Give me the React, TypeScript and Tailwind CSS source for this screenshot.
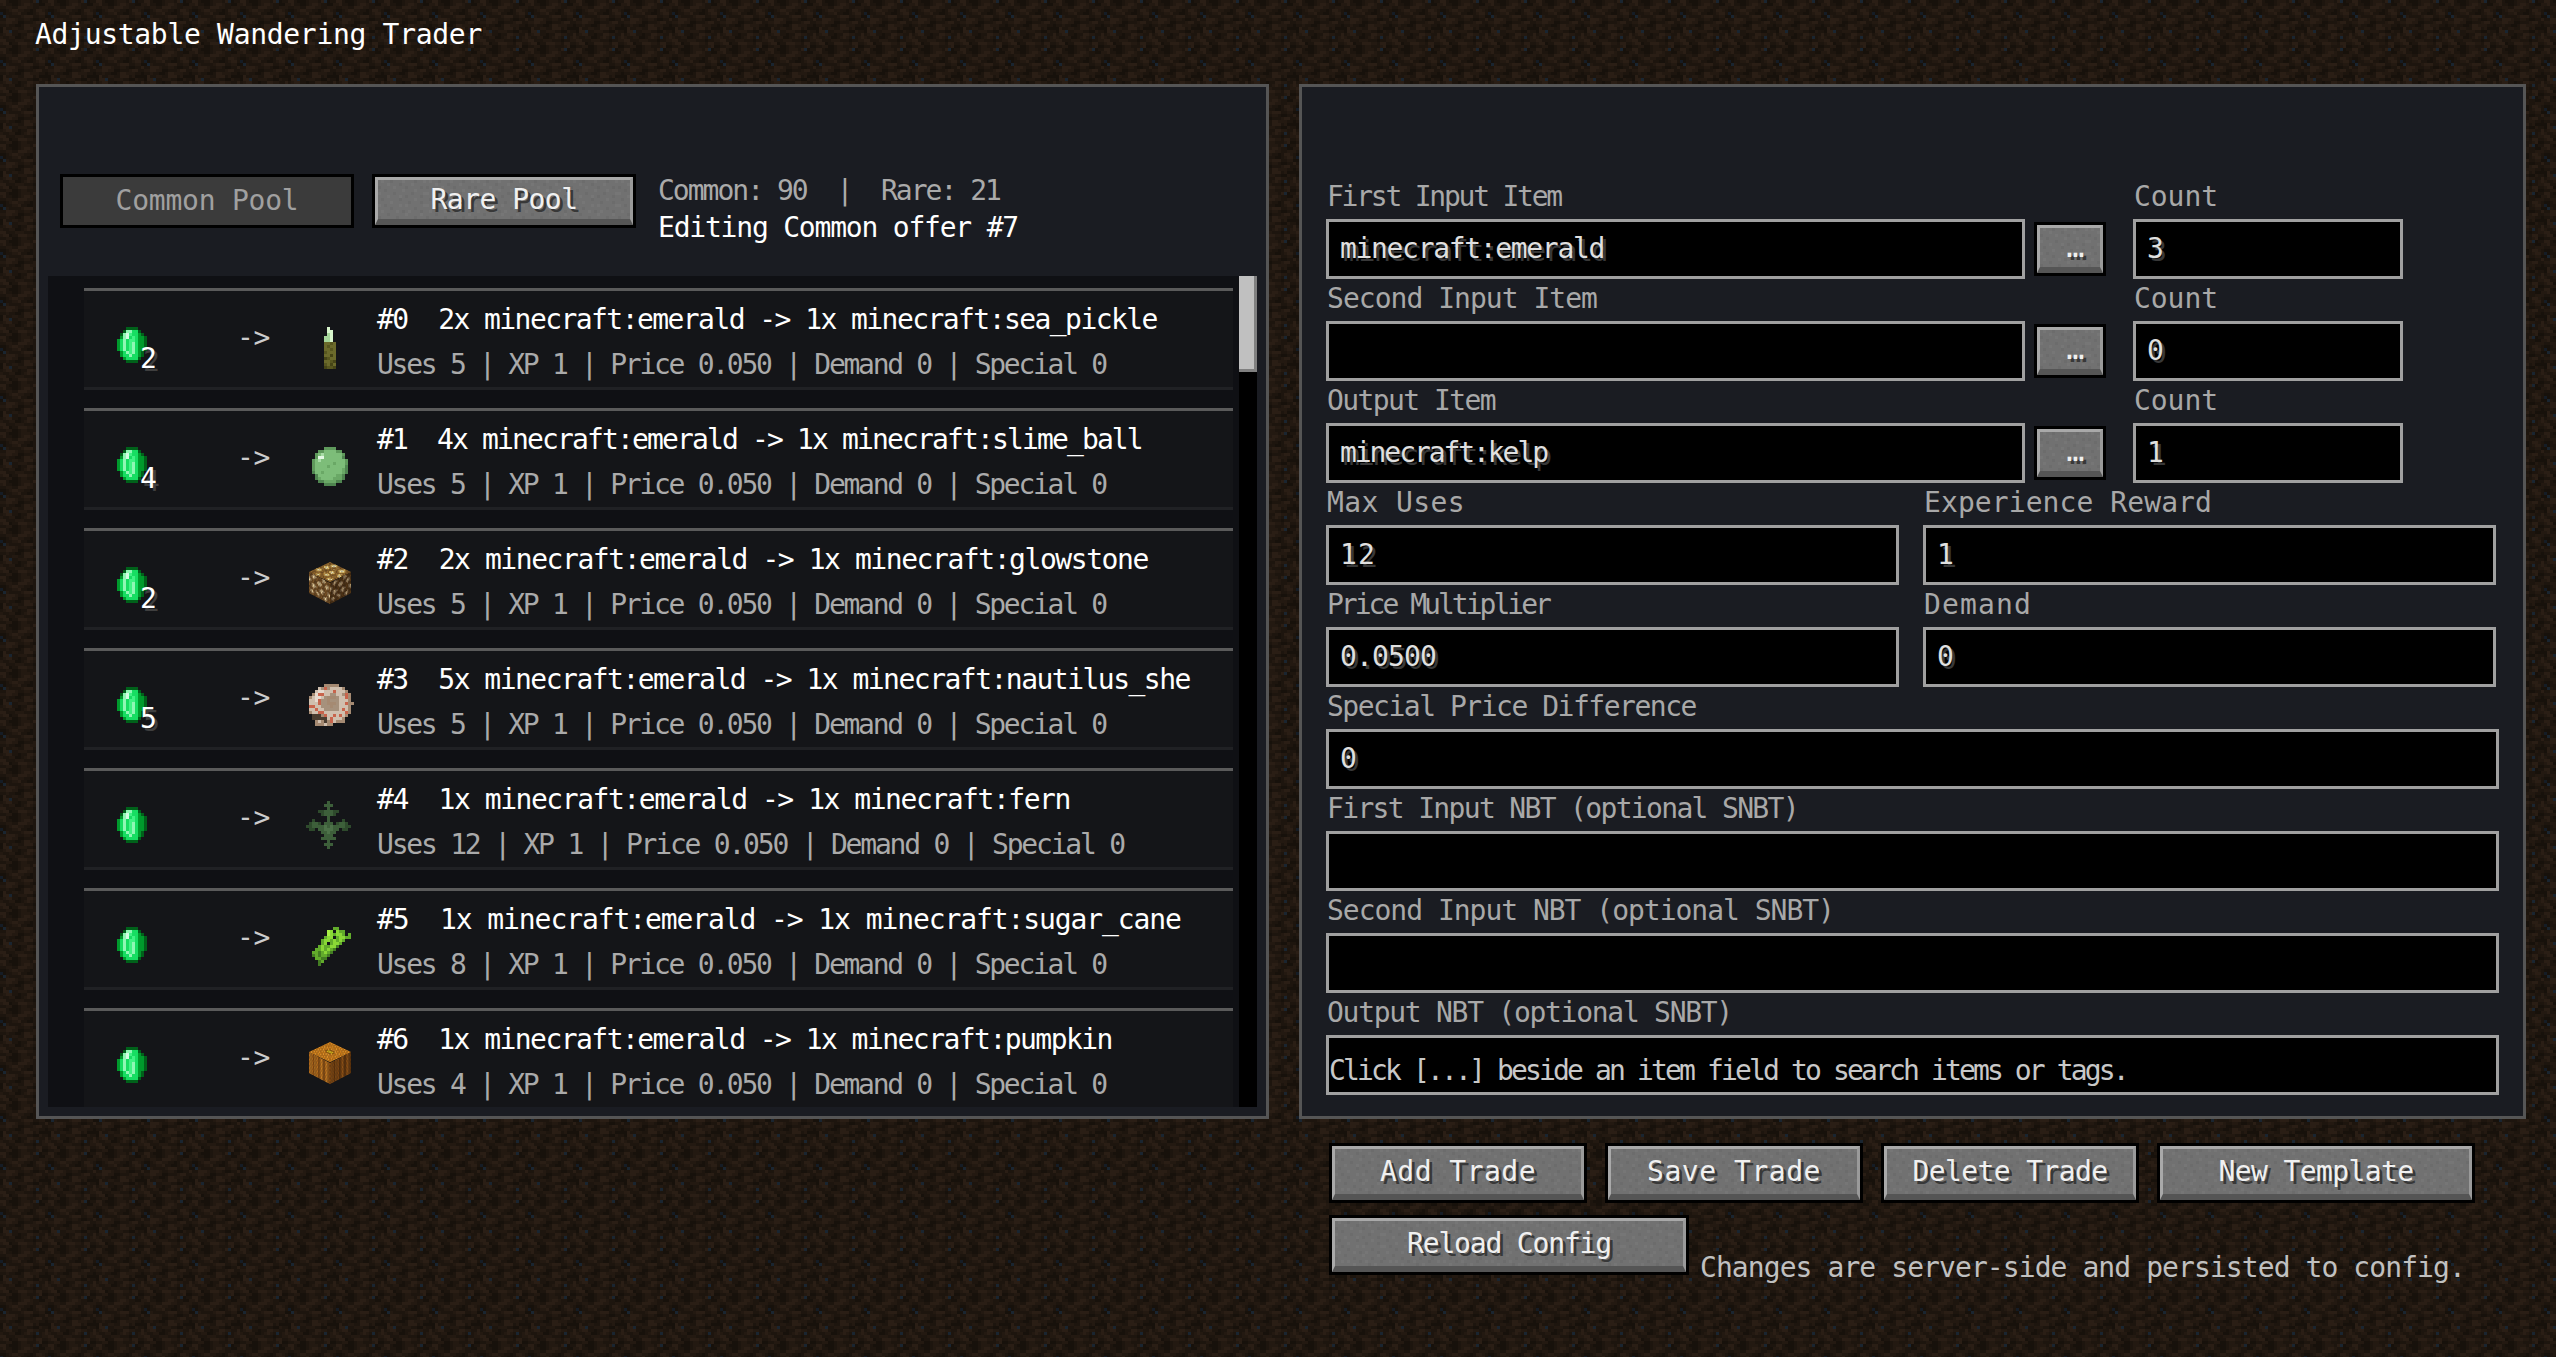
import React from 'react';

// Minecraft font advances (in font pixels, GUI scale is 3)
const narrow: Record<string, number> = {
  i: 2, l: 3, t: 4, f: 5, k: 5, I: 4, ' ': 4, '.': 2, ',': 2, ':': 2, ';': 2, '!': 2, '|': 2,
  '(': 5, ')': 5, '[': 4, ']': 4, '>': 5, '<': 5,
};
const textWidth = (s: string) => [...s].reduce((sum, c) => sum + (narrow[c] ?? 6), 0) * 3;

const T = ({ children, className = '' }: { children: string; className?: string }) => (
  <span
    className={`block whitespace-pre font-['DejaVu_Sans_Mono',monospace] text-[28px] leading-[27px] ${className}`}
    style={{ letterSpacing: textWidth(children) / children.length - 16.86 }}
  >
    {children}
  </span>
);

type Palette = Record<string, string>;

const Pixels = ({ rows, pal }: { rows: string[]; pal: Palette }) => (
  <>
    {rows.map((row, y) =>
      [...row].map((c, x) => (pal[c] ? <rect key={`${x}-${y}`} x={x} y={y} width={1.02} height={1.02} fill={pal[c]} /> : null))
    )}
  </>
);

const Sprite = ({ rows, pal }: { rows: string[]; pal: Palette }) => (
  <svg width={48} height={48} viewBox="0 0 16 16" shapeRendering="crispEdges" className="block">
    <Pixels rows={rows} pal={pal} />
  </svg>
);

const emerald = [
  '................',
  '................',
  '......DDDD......',
  '.....DWWggD.....',
  '....DWPLggGD....',
  '....GWPgLgGGD...',
  '...GgWgLLgGGD...',
  '...GgWgLWgGGD...',
  '...GgWgLWgGGD...',
  '...GgWgLWgGGD...',
  '....GgWLWgGD....',
  '....GggWggGD....',
  '.....GggggD.....',
  '......DDDD......',
  '................',
  '................',
];
const emeraldPal = { D: '#00611a', G: '#009a2c', g: '#17dd62', L: '#41f384', W: '#8ff7b4', P: '#d2fde2' };

const seaPickle = [
  '................',
  '................',
  '.......l........',
  '.......ll.......',
  '.......Ll.......',
  '......LLl.......',
  '......LLl.......',
  '......ooOo......',
  '......oOoo......',
  '......ooOo......',
  '......Oooo......',
  '......oodo......',
  '......dOoo......',
  '......ooOd......',
  '......Oodo......',
  '......dOOd......',
];
const seaPicklePal = { l: '#d8f5cc', L: '#a5d69a', o: '#6b6a2b', O: '#57561f', d: '#454416' };

const slime = [
  '................',
  '................',
  '......gggg......',
  '....ggLLLLgg....',
  '...gLWLLLLLLg...',
  '...gPPLLLLLLd...',
  '..gLWLLLLLLLLg..',
  '..gLLLLLLMLLLg..',
  '..gLLLLMLLLLLd..',
  '..gLLLLLLLLLMd..',
  '..dLLMLLLLLLMd..',
  '...dLLLLLLMMd...',
  '...dMLLLLMMMd...',
  '....ddMMMMdd....',
  '......dddd......',
  '................',
];
const slimePal = { g: '#5f9a5c', L: '#7dbd79', M: '#6aa866', d: '#4f8550', W: '#a8dca6', P: '#e4f8e4' };

const nautilus = [
  '................',
  '......bbbbb.....',
  '....ctrtccccb...',
  '...cwwcccrcccb..',
  '..bwrrccttcctrb.',
  '.bcwwctbbbtccrb.',
  '.ccwrttbtttcccb.',
  '.cccrttbbbtccrbb',
  '.rrcctttbttcccb.',
  '.ccrcctttttcrcb.',
  '.bccrrcccccccrb.',
  '..dddbrccrcrcb..',
  '..dddddcrcccb...',
  '...bcbdbrcbbb...',
  '...bbbcbb.......',
  '................',
];
const nautilusPal = { b: '#a58a72', c: '#d0bfae', t: '#a6917c', r: '#c8644c', w: '#e6dacf', d: '#4a3d30' };

const fern = [
  '.......m........',
  '......mmm.......',
  '.......m........',
  '....ddmmmdd.....',
  '.....dmmmd......',
  '.......m........',
  '..d....m....d...',
  '.dmmd.mmm.dmmd..',
  'ddmmmmlmlmmmmdd.',
  '.dd.mmlllmm.dd..',
  '.....mmlmm......',
  '......mmm.......',
  '.....mmmmm......',
  '.......m........',
  '......mmm.......',
  '.......m........',
];
const fernPal = { d: '#2e4a2c', m: '#3d5f3a', l: '#4d7249' };

const sugarCane = [
  '................',
  '................',
  '.........gg.....',
  '.......lL.Lgg...',
  '.......lLgLLg.g.',
  '......gLL.gLLgg.',
  '.....gLLgLgLg...',
  '.....gL.gLLg....',
  '....gLggLLd.....',
  '...ggLgLgd......',
  '..ggdgLgd.......',
  '..dgdggd........',
  '...ggdd.........',
  '....dg..........',
  '....d...........',
  '................',
];
const sugarCanePal = { l: '#a8ee45', L: '#8ad836', g: '#62ab2b', d: '#437d22' };

const glowTop = [
  'aabayyaabaacaaba',
  'abayYYyaabayyaab',
  'aaayYYaacayYYyaa',
  'acaayabaaayYYyab',
  'aayyaaaccaayyaaa',
  'ayYYyaaaaabaaaca',
  'aayYyabayyaaayya',
  'baaaaaayYYyaayYy',
  'aacaabaayYyaaayY',
  'ayyaaaaaaaabaaaa',
  'yYYyaacayyaaacaa',
  'ayyaabayYYyaaaab',
  'aaacaaaayyaacaya',
  'abaaayaaaaaayyYa',
  'aaaayYyaabaayYya',
  'abaaayaaaaabaaaa',
];
const glowSide = [
  'aabccabaaacdabaa',
  'abcddcaaabcdcaab',
  'aacdcaabaaccaaaa',
  'caacaaaccaaaacca',
  'dcaaabcddcabcdda',
  'dcaabacddcaacdca',
  'caaaaaaccaaaacaa',
  'aacdcaaaaabaaaab',
  'abcddcabaccaaaca',
  'aacdcaaacddcaacd',
  'baacaabacdcaaacd',
  'aaaaacaaaccaaaac',
  'acdaacdcaaaabcaa',
  'acdcaacdaabcdcab',
  'aacaaaacaaacdcaa',
  'baaabaaaabaacaaa',
];

const Glowstone = () => (
  <svg width={48} height={48} viewBox="0 0 48 48" className="block">
    <g transform="matrix(1.3125 0.625 -1.3125 0.625 24 1)">
      <Pixels rows={glowTop} pal={{ a: '#a0702f', b: '#7a5224', c: '#c89c54', y: '#ffd56e', Y: '#fff4c4' }} />
    </g>
    <g transform="matrix(1.3125 0.6875 0 1.3125 3 11)">
      <Pixels rows={glowSide} pal={{ a: '#7c5426', b: '#62401b', c: '#b8986a', d: '#ecd29c' }} />
    </g>
    <g transform="matrix(1.3125 -0.6875 0 1.3125 24 22)">
      <Pixels rows={glowSide} pal={{ a: '#543616', b: '#402810', c: '#84684a', d: '#b89e72' }} />
    </g>
  </svg>
);

const pumpkinTop = [
  'oOoOooOoOooOoOoo',
  'OooOoOooOoOooOoO',
  'ooOooOoOooOoOooo',
  'oOooOoooOoooOoOo',
  'OoooOoOoOoOoooOo',
  'oOoOooOOOOooOooO',
  'ooOoOOssssOOoOoo',
  'oOoOosyyyysOoOoO',
  'OooOosyyyysooOoo',
  'ooOoOOssssOOoOoo',
  'oOooOooOOOoooOoO',
  'OoOoooOoOoOoOooo',
  'ooOoOooOooOooOoO',
  'oOooOoOooOoOoooo',
  'OooOooOoOooOoOoO',
  'oOoOoOooOoOooOoo',
];
const pumpkinSide = Array.from({ length: 16 }, () => 'bBbdBbbdbBbdbBbd');

const Pumpkin = () => (
  <svg width={48} height={48} viewBox="0 0 48 48" className="block">
    <g transform="matrix(1.3125 0.625 -1.3125 0.625 24 1)">
      <Pixels rows={pumpkinTop} pal={{ o: '#e08618', O: '#f29e2c', s: '#a96510', y: '#e8c21e' }} />
    </g>
    <g transform="matrix(1.3125 0.6875 0 1.3125 3 11)">
      <Pixels rows={pumpkinSide} pal={{ b: '#b86e1c', B: '#cc8024', d: '#8f5012' }} />
    </g>
    <g transform="matrix(1.3125 -0.6875 0 1.3125 24 22)">
      <Pixels rows={pumpkinSide} pal={{ b: '#804812', B: '#925416', d: '#60340b' }} />
    </g>
  </svg>
);

const dirtTile = [
  'ccadddabbbacedaa',
  'bcaaddabccbaaddb',
  'aabbaacccbbaabbb',
  'ddabccbbaadaccba',
  'fdaabbcaaddabcca',
  'debaaaabcccaabbd',
  'aacccbaabbaddaac',
  'bbccbbddaaabccaa',
  'aabaaddaccbbbaad',
  'dcaabbaacccabddd',
  'dcceaabbbaaddbaa',
  'abccaadaaccbbaac',
  'baabbddabcbaeabc',
  'ccaaabbbaaadaabb',
  'bccdaacccbbaccaa',
  'aabbddabbaaabcdd',
];
const dirtPal = { a: '#1d150e', b: '#231911', c: '#2a1e15', d: '#17110b', e: '#1a2530', f: '#151c25' };

const stoneTile = [
  '.l..d...l...d..l',
  '...l...d...l....',
  'd....l...d....d.',
  '..d.....l...l...',
  'l....d.....d...l',
  '...l...l.d....d.',
  '.d.....d....l...',
  '....l.....d...d.',
  'l.d....l.l.....l',
  '....d.......d...',
  '.l....l.d.l...d.',
  '...d.....l....l.',
  'd.....d.....d...',
  '..l.l...d.l....d',
  '......l....d.l..',
  '.d..d....l......',
];

// stone grain shared by all the vanilla-style buttons
const Grain = () => (
  <svg className="absolute inset-0 h-full w-full" shapeRendering="crispEdges">
    <rect width="100%" height="100%" fill="url(#stone-tile)" />
  </svg>
);

const McButton = ({ label, className = '' }: { label: string; className?: string }) => (
  <div className={`border-[3px] border-black ${className}`}>
    <div className="relative flex h-full items-center justify-center border-t-[3px] border-r-[3px] border-b-[6px] border-l-[3px] border-t-[#a9a9a9] border-r-[#9a9a9a] border-b-[#555555] border-l-[#a9a9a9] bg-[#717171]">
      <Grain />
      <T className="relative text-[#f0f0f0] [text-shadow:3px_3px_0_#383838]">{label}</T>
    </div>
  </div>
);

const Field = ({ label, value, hint, className = '' }: { label: string; value?: string; hint?: string; className?: string }) => (
  <div className={className}>
    <div className="h-[42px] pt-[6px] pl-[1px]">
      <T className="text-[#a8a8a8]">{label}</T>
    </div>
    <div className="h-[60px] border-[3px] border-[#a0a0a0] bg-black">
      {value && <T className="pt-[13px] pl-[11px] text-[#e0e0e0] [text-shadow:3px_3px_0_#383838]">{value}</T>}
      {hint && <T className="pt-[19px] text-[#c8c8c8]">{hint}</T>}
    </div>
  </div>
);

const offers = [
  { id: 0, count: 2, name: 'sea_pickle', uses: 5, icon: <Sprite rows={seaPickle} pal={seaPicklePal} /> },
  { id: 1, count: 4, name: 'slime_ball', uses: 5, icon: <Sprite rows={slime} pal={slimePal} /> },
  { id: 2, count: 2, name: 'glowstone', uses: 5, icon: <Glowstone /> },
  { id: 3, count: 5, name: 'nautilus_she', uses: 5, icon: <Sprite rows={nautilus} pal={nautilusPal} /> },
  { id: 4, count: 1, name: 'fern', uses: 12, icon: <Sprite rows={fern} pal={fernPal} /> },
  { id: 5, count: 1, name: 'sugar_cane', uses: 8, icon: <Sprite rows={sugarCane} pal={sugarCanePal} /> },
  { id: 6, count: 1, name: 'pumpkin', uses: 4, icon: <Pumpkin /> },
];

const OfferRow = ({ offer }: { offer: (typeof offers)[number] }) => (
  <div className="mb-[18px] flex h-[102px] shrink-0 border-t-[3px] border-b-[3px] border-t-[#5a5a5a] border-b-[#202124] bg-[#141518]">
    <div className="w-[153px] pt-[30px] pl-[24px]">
      <div className="relative h-[48px] w-[48px]">
        <Sprite rows={emerald} pal={emeraldPal} />
        {offer.count > 1 && (
          <T className="absolute top-[24px] left-[32px] text-white [text-shadow:3px_3px_0_#3f3f3f]">{String(offer.count)}</T>
        )}
      </div>
    </div>
    <div className="w-[69px] pt-[33px]">
      <T className="text-[#cccccc]">{'->'}</T>
    </div>
    <div className="w-[71px] pt-[30px]">{offer.icon}</div>
    <div className="pt-[15px]">
      <T className="mb-[18px] text-white">{`#${offer.id}  ${offer.count}x minecraft:emerald -> 1x minecraft:${offer.name}`}</T>
      <T className="text-[#aaaaaa]">{`Uses ${offer.uses} | XP 1 | Price 0.050 | Demand 0 | Special 0`}</T>
    </div>
  </div>
);

export default function App() {
  return (
    <div className="relative h-[1357px] w-[2556px] overflow-hidden bg-[#1d150e]">
      <svg className="absolute inset-0 h-full w-full" shapeRendering="crispEdges">
        <defs>
          <pattern id="dirt-tile" width={16} height={16} patternUnits="userSpaceOnUse" patternTransform="scale(3)">
            <Pixels rows={dirtTile} pal={dirtPal} />
          </pattern>
          <pattern id="stone-tile" width={16} height={16} patternUnits="userSpaceOnUse" patternTransform="scale(3)">
            <Pixels rows={stoneTile} pal={{ l: '#767676', d: '#6c6c6c' }} />
          </pattern>
        </defs>
        <rect width="100%" height="100%" fill="url(#dirt-tile)" />
      </svg>

      <div className="relative">
        <div className="h-[84px] pt-[21px] pl-[35px]">
          <T className="text-white">Adjustable Wandering Trader</T>
        </div>

        <div className="flex pl-[36px]">
          {/* Offer list */}
          <div className="h-[1035px] w-[1233px] border-[3px] border-[#555555] bg-[#1a1c22] pt-[87px] pl-[9px]">
            <div className="flex h-[54px] items-start pl-[12px]">
              <div className="flex h-[54px] w-[294px] items-center justify-center border-[3px] border-black bg-[#3b3b3b] pb-[2px]">
                <T className="text-[#a0a0a0]">Common Pool</T>
              </div>
              <McButton label="Rare Pool" className="ml-[18px] h-[54px] w-[264px]" />
              <div className="ml-[22px] pt-[3px]">
                <T className="mb-[10px] text-[#aaaaaa]">Common: 90  |  Rare: 21</T>
                <T className="text-white">Editing Common offer #7</T>
              </div>
            </div>

            <div className="mt-[48px] flex h-[831px] w-[1209px] overflow-hidden bg-[#0f1014]">
              <div className="flex w-[1191px] flex-col overflow-hidden pt-[12px] pr-[6px] pl-[36px]">
                {offers.map((offer) => (
                  <OfferRow key={offer.id} offer={offer} />
                ))}
              </div>
              <div className="h-full w-[18px] bg-black">
                <div className="h-[96px] bg-[#c0c0c0] shadow-[inset_-3px_-3px_0_#808080]" />
              </div>
            </div>
          </div>

          {/* Trade editor */}
          <div className="ml-[30px] w-[1227px]">
            <div className="h-[1035px] border-[3px] border-[#555555] bg-[#1a1c22] pt-[90px] pl-[24px]">
              {[
                ['First Input Item', 'minecraft:emerald', '3'],
                ['Second Input Item', '', '0'],
                ['Output Item', 'minecraft:kelp', '1'],
              ].map(([label, item, count]) => (
                <div key={label} className="flex items-start">
                  <Field label={label} value={item} className="w-[699px]" />
                  <McButton label="..." className="mt-[45px] ml-[9px] h-[54px] w-[72px]" />
                  <Field label="Count" value={count} className="ml-[27px] w-[270px]" />
                </div>
              ))}
              <div className="flex gap-[24px]">
                <Field label="Max Uses" value="12" className="w-[573px]" />
                <Field label="Experience Reward" value="1" className="w-[573px]" />
              </div>
              <div className="flex gap-[24px]">
                <Field label="Price Multiplier" value="0.0500" className="w-[573px]" />
                <Field label="Demand" value="0" className="w-[573px]" />
              </div>
              <Field label="Special Price Difference" value="0" className="w-[1173px]" />
              <Field label="First Input NBT (optional SNBT)" className="w-[1173px]" />
              <Field label="Second Input NBT (optional SNBT)" className="w-[1173px]" />
              <Field
                label="Output NBT (optional SNBT)"
                hint="Click [...] beside an item field to search items or tags."
                className="w-[1173px]"
              />
            </div>

            <div className="mt-[24px] pl-[30px]">
              <div className="flex gap-[18px]">
                <McButton label="Add Trade" className="h-[60px] w-[258px]" />
                <McButton label="Save Trade" className="h-[60px] w-[258px]" />
                <McButton label="Delete Trade" className="h-[60px] w-[258px]" />
                <McButton label="New Template" className="h-[60px] w-[318px]" />
              </div>
              <div className="mt-[12px] flex items-start">
                <McButton label="Reload Config" className="h-[60px] w-[360px]" />
                <T className="mt-[39px] ml-[11px] text-[#c0c0c0]">Changes are server-side and persisted to config.</T>
              </div>
            </div>
          </div>
        </div>
      </div>
    </div>
  );
}
